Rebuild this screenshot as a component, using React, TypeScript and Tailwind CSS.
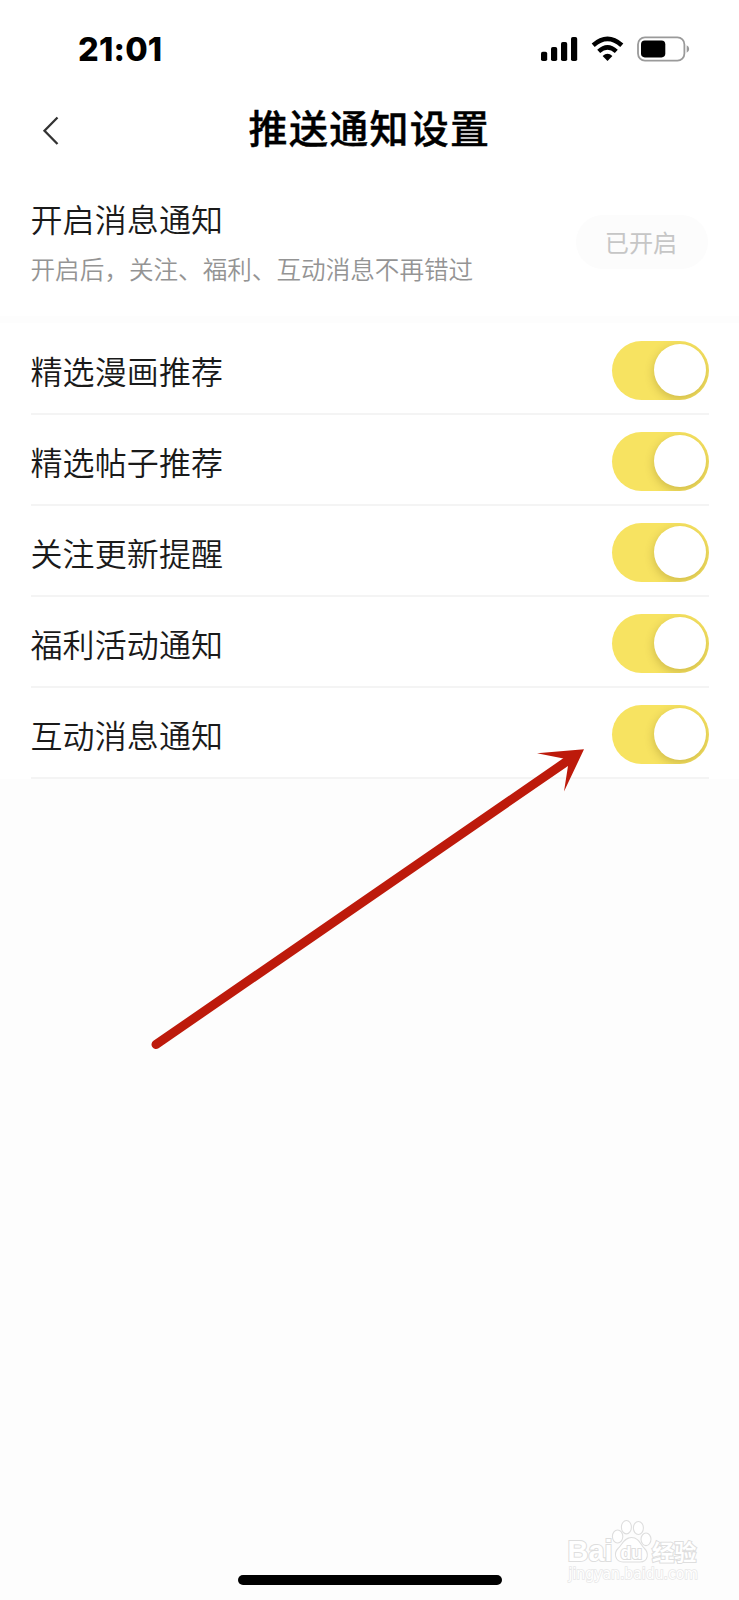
import React from "react";

const settings: string[] = [
  "精选漫画推荐",
  "精选帖子推荐",
  "关注更新提醒",
  "福利活动通知",
  "互动消息通知",
];

function StatusBar() {
  return (
    <div className="flex h-[90px] items-start justify-between pl-[78px] pr-[49px]">
      <span className="mt-[30px] font-['Inter',sans-serif] text-[32.500px] font-extrabold leading-[40px] tracking-[0.200px] text-black">
        21:01
      </span>
      <svg className="mt-[30px]" width="150" height="36" viewBox="540 30 150 36" fill="none">
        <g fill="#000">
          <rect x="541" y="51.7" width="6.2" height="9.3" rx="1.8" />
          <rect x="551" y="47" width="6.2" height="14" rx="1.8" />
          <rect x="561" y="42" width="6.2" height="19" rx="1.8" />
          <rect x="571" y="37" width="6.2" height="24" rx="1.8" />
          <path d="M607.5 61 L602.6 56 Q607.5 51.6 612.4 56 Z" />
        </g>
        <path d="M593.2 45.2 Q607.5 32.6 621.8 45.2" stroke="#000" strokeWidth="4.6" />
        <path d="M598.7 51.4 Q607.5 43.4 616.3 51.4" stroke="#000" strokeWidth="4.4" />
        <rect x="638" y="37.4" width="46.4" height="23.2" rx="7" stroke="#9a9a9a" strokeWidth="1.8" />
        <rect x="641" y="40.6" width="24.3" height="16.8" rx="3.8" fill="#000" />
        <path d="M686.7 45.3 Q689.2 46.4 689.2 49 Q689.2 51.6 686.7 52.7 Z" fill="#9a9a9a" />
      </svg>
    </div>
  );
}

function Toggle() {
  return (
    <div className="mt-[16.500px] flex h-[59px] w-[97px] shrink-0 items-center justify-end overflow-hidden rounded-full bg-[#f7e361] pr-[3.500px]">
      <div className="size-[51.500px] rounded-full bg-white shadow-[0_3px_10px_rgba(80,60,0,0.25)]" />
    </div>
  );
}

function Watermark() {
  return (
    <svg width="142" height="76" viewBox="562 1514 142 76" overflow="visible" stroke="#dedede" strokeWidth="1.1" fill="#fff">
      <ellipse cx="617.6" cy="1536.500" rx="5.2" ry="6.5" />
      <ellipse cx="626.4" cy="1527.200" rx="5" ry="6.7" />
      <ellipse cx="638.4" cy="1528" rx="5" ry="6.5" />
      <ellipse cx="646" cy="1539.3" rx="5" ry="6.3" />
      <path d="M631.5 1537.5 C624 1537.5 622 1545 618 1548.5 C613.500 1553 615 1562 623 1562 H640 C648.500 1562 649 1553 644.500 1548.500 C640.500 1545 639 1537.500 631.500 1537.500 Z" />
      <g style={{ paintOrder: "stroke" }} strokeWidth="2">
        <text x="567.500" y="1561" textLength="45" lengthAdjust="spacingAndGlyphs" className="font-['Liberation_Sans',sans-serif] text-[29px] font-bold">Bai</text>
        <text x="620.500" y="1558.500" textLength="21.500" lengthAdjust="spacingAndGlyphs" className="font-['Liberation_Sans',sans-serif] text-[18px] font-bold">du</text>
        <text x="652" y="1560" textLength="44.500" lengthAdjust="spacingAndGlyphs" className="font-['Noto_Sans_CJK_SC',sans-serif] text-[22px] font-bold">经验</text>
        <text x="568.500" y="1578.500" textLength="129.500" lengthAdjust="spacingAndGlyphs" strokeWidth="1.500" stroke="#e7e7e7" className="font-['DejaVu_Sans',sans-serif] text-[15px]">jingyan.baidu.com</text>
      </g>
    </svg>
  );
}

export default function App() {
  return (
    <div lang="zh-CN" className="relative flex h-[1600px] w-[739px] flex-col overflow-hidden bg-[#fdfdfd] font-['Noto_Sans_CJK_SC',sans-serif]">
      <div className="h-[316px] shrink-0 bg-white">
        <StatusBar />
        <header className="grid h-[80px] grid-cols-[100px_1fr_100px] items-center">
          <button aria-label="返回" className="flex h-full items-center pl-[42px]">
            <svg width="18" height="30" viewBox="0 0 18 30" fill="none" stroke="#333" strokeWidth="2.3">
              <path d="M15.500 2.500 L2.500 15.700 L15.500 29" />
            </svg>
          </button>
          <h1 className="-mt-[9px] text-center text-[39px] font-medium leading-[56px] tracking-[1.3px] text-black [-webkit-text-stroke:0.4px_#000]">
            推送通知设置
          </h1>
        </header>
        <section className="flex items-start justify-between pl-[30.500px] pr-[31px] pt-[24px]">
          <div>
            <h2 className="text-[32px] font-[350] leading-[48px] tracking-[0.100px] text-[#1a1a1a]">开启消息通知</h2>
            <p className="mt-[8px] text-[24.600px] font-[350] leading-[36px] text-[#949494]">
              开启后，关注、福利、互动消息不再错过
            </p>
          </div>
          <div className="mt-[21px] flex h-[54px] w-[132px] items-center justify-center rounded-full bg-[#fcfcfc] pr-[2px] text-[24.200px] text-[#c6c6c6]">
            已开启
          </div>
        </section>
      </div>
      <ul className="mt-[7px] shrink-0 bg-white pl-[30.500px] pr-[30px] pt-px">
        {settings.map((label) => (
          <li key={label} className="flex h-[91px] items-start justify-between border-b-2 border-[#f4f4f4]">
            <span className="mt-[22px] text-[32px] font-[350] leading-[48px] tracking-[0.100px] text-[#1a1a1a]">{label}</span>
            <Toggle />
          </li>
        ))}
      </ul>
      <div className="mt-auto flex justify-end pr-[35px]">
        <Watermark />
      </div>
      <div className="mx-auto mb-[15px] -mt-[15px] h-[10px] w-[264px] shrink-0 rounded-full bg-black" />
      <svg className="pointer-events-none absolute left-[140px] top-[740px]" width="460" height="320" viewBox="140 740 460 320">
        <path d="M156 1044.500 L568 760.500" stroke="#bd1a0b" strokeWidth="9" strokeLinecap="round" />
        <path d="M584 749.300 L537 753.200 L563.500 758.500 L568 766 L564 791.500 Z" fill="#bd1a0b" />
      </svg>
    </div>
  );
}
